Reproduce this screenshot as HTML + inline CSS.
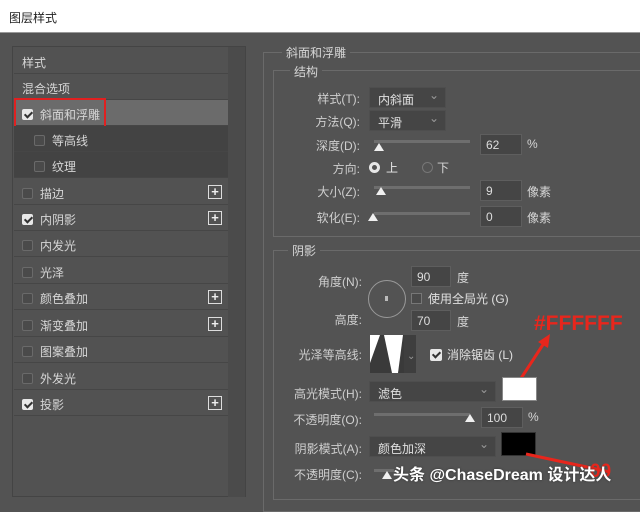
<!DOCTYPE html>
<html><head><meta charset="utf-8"><style>
*{margin:0;padding:0;box-sizing:border-box}
body{width:640px;height:497px;background:#535353;position:relative;overflow:hidden;font-family:"Liberation Sans","Noto Sans CJK SC",sans-serif;font-size:12px;color:#d6d6d6}
.a{position:absolute;white-space:nowrap}
.title{left:0;top:0;width:640px;height:33px;background:#fff;color:#222;font-size:12px;padding:9px 0 0 9px;border-bottom:1px solid #999}
.row{position:absolute;left:14px;width:214px;height:26px;border-bottom:1px solid #464646;padding:6px 0 0 8px}
.cb{display:inline-block;width:11px;height:11px;border:1px solid #6a6a6a;background:#4a4a4a;border-radius:2px;vertical-align:-1px;margin-right:7px}
.ck{background:#e8e8e8;border-color:#e8e8e8;position:relative}
.ck:after{content:"";position:absolute;left:3px;top:0px;width:3px;height:6px;border:solid #333;border-width:0 2px 2px 0;transform:rotate(45deg)}
.plus{position:absolute;right:6px;top:6px;width:14px;height:14px;border:1px solid #ddd;color:#eee;font-size:13px;line-height:11px;text-align:center;font-weight:bold}
.box{position:absolute;border:1px solid #6a6a6a}
.lg{position:absolute;background:#535353;padding:0 4px;color:#d6d6d6}
.inp{position:absolute;height:21px;background:#454545;border:1px solid #5e5e5e;padding:3px 0 0 5px;color:#ddd}
.sel{position:absolute;height:21px;background:#454545;border:1px solid #4e4e4e;padding:3px 0 0 8px;color:#e0e0e0}
.sel:after{content:"⌄";position:absolute;right:6px;top:0;color:#999}
.lbl{position:absolute;text-align:right;color:#cfcfcf}
.trk{position:absolute;height:3px;background:#6e6e6e}
.th{position:absolute;width:0;height:0;border-left:5px solid transparent;border-right:5px solid transparent;border-bottom:8px solid #f0f0f0}
</style></head><body>
<div class="a title">图层样式</div>
<div class="a" style="left:12px;top:46px;width:234px;height:451px;border:1px solid #444;background:#525252"></div>
<div class="a" style="left:228px;top:47px;width:17px;height:450px;background:#4b4b4b"></div>
<div class="row" style="top:48px">样式</div>
<div class="row" style="top:74px">混合选项</div>
<div class="row" style="top:100px;background:#6b6b6b"><span class="cb ck"></span>斜面和浮雕</div>
<div class="a" style="left:14px;top:98px;width:92px;height:30px;border:2px solid #e02020"></div>
<div class="row" style="top:126px;background:#434343;padding-left:20px"><span class="cb"></span>等高线</div>
<div class="row" style="top:152px;background:#434343;padding-left:20px"><span class="cb"></span>纹理</div>
<div class="row" style="top:179px"><span class="cb"></span>描边<span class="plus">+</span></div>
<div class="row" style="top:205px"><span class="cb ck"></span>内阴影<span class="plus">+</span></div>
<div class="row" style="top:231px"><span class="cb"></span>内发光</div>
<div class="row" style="top:258px"><span class="cb"></span>光泽</div>
<div class="row" style="top:284px"><span class="cb"></span>颜色叠加<span class="plus">+</span></div>
<div class="row" style="top:311px"><span class="cb"></span>渐变叠加<span class="plus">+</span></div>
<div class="row" style="top:337px"><span class="cb"></span>图案叠加</div>
<div class="row" style="top:364px"><span class="cb"></span>外发光</div>
<div class="row" style="top:390px"><span class="cb ck"></span>投影<span class="plus">+</span></div>

<div class="box" style="left:263px;top:52px;width:390px;height:460px"></div>
<div class="lg" style="left:282px;top:44px">斜面和浮雕</div>
<div class="box" style="left:273px;top:70px;width:380px;height:167px"></div>
<div class="lg" style="left:290px;top:63px">结构</div>
<div class="lbl" style="left:290px;top:90px;width:70px">样式(T):</div>
<div class="sel" style="left:369px;top:87px;width:77px">内斜面</div>
<div class="lbl" style="left:290px;top:113px;width:70px">方法(Q):</div>
<div class="sel" style="left:369px;top:110px;width:77px">平滑</div>
<div class="lbl" style="left:290px;top:137px;width:70px">深度(D):</div>
<div class="trk" style="left:374px;top:140px;width:96px"></div><div class="th" style="left:374px;top:143px"></div>
<div class="inp" style="left:480px;top:134px;width:42px">62</div><div class="a" style="left:527px;top:137px">%</div>
<div class="lbl" style="left:290px;top:160px;width:70px">方向:</div>
<div class="a" style="left:369px;top:162px;width:11px;height:11px;border:3px solid #e8e8e8;border-radius:50%"></div><div class="a" style="left:386px;top:159px;color:#e8e8e8">上</div>
<div class="a" style="left:422px;top:162px;width:11px;height:11px;border:1px solid #777;border-radius:50%"></div><div class="a" style="left:437px;top:159px">下</div>
<div class="lbl" style="left:290px;top:183px;width:70px">大小(Z):</div>
<div class="trk" style="left:374px;top:186px;width:96px"></div><div class="th" style="left:376px;top:187px"></div>
<div class="inp" style="left:480px;top:180px;width:42px">9</div><div class="a" style="left:527px;top:183px">像素</div>
<div class="lbl" style="left:290px;top:209px;width:70px">软化(E):</div>
<div class="trk" style="left:374px;top:212px;width:96px"></div><div class="th" style="left:368px;top:213px"></div>
<div class="inp" style="left:480px;top:206px;width:42px">0</div><div class="a" style="left:527px;top:209px">像素</div>

<div class="box" style="left:273px;top:250px;width:380px;height:250px"></div>
<div class="lg" style="left:288px;top:242px">阴影</div>
<div class="lbl" style="left:280px;top:273px;width:82px">角度(N):</div>
<div class="a" style="left:368px;top:280px;width:38px;height:38px;border:1px solid #999;border-radius:50%"></div>
<div class="a" style="left:385px;top:296px;width:3px;height:5px;background:#bbb"></div>
<div class="inp" style="left:411px;top:266px;width:40px">90</div><div class="a" style="left:457px;top:269px">度</div>
<div class="a" style="left:411px;top:293px;width:11px;height:11px;border:1px solid #777;background:#4a4a4a"></div>
<div class="a" style="left:428px;top:290px;color:#e0e0e0">使用全局光 (G)</div>
<div class="lbl" style="left:280px;top:311px;width:82px">高度:</div>
<div class="inp" style="left:411px;top:310px;width:40px">70</div><div class="a" style="left:457px;top:313px">度</div>
<div class="lbl" style="left:280px;top:346px;width:82px">光泽等高线:</div>
<svg class="a" style="left:370px;top:335px" width="46" height="38"><rect width="34" height="38" fill="#fff"/><polygon points="0,38 0,28 10,0 14,0 22,38" fill="#3a3a3a"/><polygon points="28,38 33,0 34,0 34,38" fill="#3a3a3a"/><rect x="34" width="12" height="38" fill="#3e3e3e"/><text x="37" y="24" fill="#999" font-size="10">⌄</text></svg>
<div class="a ck cb" style="left:430px;top:349px;width:12px;height:12px"></div>
<div class="a" style="left:447px;top:346px;color:#e0e0e0">消除锯齿 (L)</div>
<div class="a" style="left:534px;top:312px;color:#e8261c;font-size:21px;font-weight:bold">#FFFFFF</div>
<svg class="a" style="left:510px;top:330px" width="50" height="60"><line x1="6" y1="56" x2="36" y2="10" stroke="#e8261c" stroke-width="3"/><polygon points="40,4 28,12 38,18" fill="#e8261c"/></svg>
<div class="lbl" style="left:268px;top:385px;width:94px">高光模式(H):</div>
<div class="sel" style="left:369px;top:381px;width:127px">滤色</div>
<div class="a" style="left:502px;top:377px;width:35px;height:24px;background:#fff;border:1px solid #888"></div>
<div class="lbl" style="left:268px;top:411px;width:94px">不透明度(O):</div>
<div class="trk" style="left:374px;top:413px;width:96px"></div><div class="th" style="left:465px;top:414px"></div>
<div class="inp" style="left:481px;top:407px;width:42px">100</div><div class="a" style="left:528px;top:410px">%</div>
<div class="lbl" style="left:268px;top:440px;width:94px">阴影模式(A):</div>
<div class="sel" style="left:369px;top:436px;width:127px">颜色加深</div>
<div class="a" style="left:501px;top:432px;width:35px;height:24px;background:#000;border:1px solid #333"></div>
<svg class="a" style="left:520px;top:450px" width="110" height="30"><line x1="6" y1="4" x2="90" y2="22" stroke="#e8261c" stroke-width="3"/></svg>
<div class="lbl" style="left:268px;top:466px;width:94px">不透明度(C):</div>
<div class="trk" style="left:374px;top:469px;width:20px"></div><div class="th" style="left:382px;top:471px"></div>
<div class="a" style="left:590px;top:461px;color:#e8261c;font-size:19px;font-weight:bold">00</div>
<div class="a" style="left:393px;top:461px;color:#fff;font-size:16px;font-weight:bold;text-shadow:0 0 2px #333">头条 @ChaseDream 设计达人</div>
</body></html>
